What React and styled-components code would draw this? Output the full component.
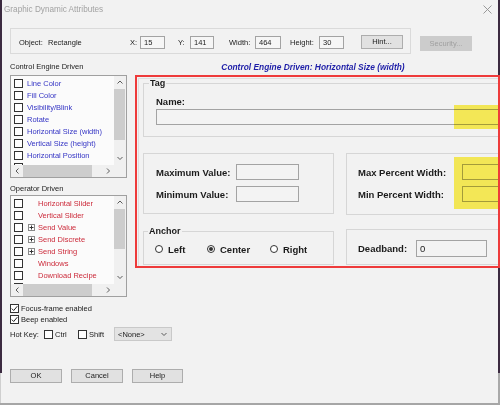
import React from "react";
import styled, { createGlobalStyle } from "styled-components";

const GlobalStyle = createGlobalStyle`
  html, body { margin: 0; padding: 0; background: #f2f2f2; }
  * { box-sizing: border-box; }
`;

const DARK = "#3b2a40";

const Window = styled.div`
  width: 500px;
  height: 405px;
  display: flex;
  flex-direction: column;
  overflow: hidden;
  background:
    linear-gradient(${DARK}, ${DARK}) left top / 2px 373px no-repeat,
    linear-gradient(${DARK}, ${DARK}) right top / 2px 373px no-repeat,
    linear-gradient(#cfcfcf, #cfcfcf) left 373px / 1px 32px no-repeat,
    linear-gradient(#a9a9a9, #a9a9a9) right 373px / 2px 32px no-repeat,
    #f2f2f2;
  border-bottom: 2px solid #a6a6a6;
  font-family: "Liberation Sans", Arial, sans-serif;
  font-size: 7.5px;
  color: #1b1b1b;
`;

const TitleBar = styled.div`
  height: 19px;
  flex: none;
  display: flex;
  align-items: center;
  justify-content: space-between;
  padding: 0 8px 0 4px;
  color: #a2a2a2;
  font-size: 8.2px;
`;

const TopRow = styled.div`
  margin-top: 9px;
  display: flex;
  align-items: flex-start;
  padding-left: 10px;
  flex: none;
`;

const TopGroup = styled.div`
  width: 401px;
  height: 26px;
  border: 1px solid #dadada;
  display: flex;
  align-items: center;
  padding: 2px 0 0 8px;
`;

const Label = styled.span`
  display: inline-block;
  width: ${(p) => p.$w}px;
  flex: none;
  white-space: nowrap;
`;

const Field = styled.div`
  display: flex;
  align-items: center;
  margin-left: ${(p) => p.$ml || 0}px;
`;

const TextBox = styled.div`
  width: ${(p) => p.$w}px;
  height: 13px;
  border: 1px solid #a3a3a3;
  background: #f6f6f6;
  padding-left: 3px;
  line-height: 11px;
  flex: none;
`;

const Button = styled.button`
  width: ${(p) => p.$w}px;
  height: ${(p) => p.$h}px;
  margin-left: ${(p) => p.$ml || 0}px;
  margin-top: ${(p) => p.$mt || 0}px;
  border: 1px solid ${(p) => (p.disabled ? "#cccccc" : "#adadad")};
  background: ${(p) => (p.disabled ? "#cccccc" : "#e1e1e1")};
  color: ${(p) => (p.disabled ? "#a0a0a0" : "#1b1b1b")};
  font-family: inherit;
  font-size: 7.5px;
  padding: 0;
  flex: none;
  line-height: 1;
`;

const Main = styled.div`
  display: flex;
  padding-left: 10px;
  margin-top: 7px;
  flex: none;
`;

const LeftCol = styled.div`
  width: 118px;
  display: flex;
  flex-direction: column;
  flex: none;
`;

const SectionLabel = styled.div`
  height: ${(p) => p.$h}px;
  line-height: ${(p) => p.$lh}px;
  margin-top: ${(p) => p.$mt || 0}px;
  white-space: nowrap;
`;

const ListBox = styled.div`
  width: 117px;
  height: ${(p) => p.$h}px;
  border: 1px solid #a0a0a0;
  background: #fbfbfb;
  display: grid;
  grid-template-columns: 1fr 12px;
  grid-template-rows: 1fr 12px;
  flex: none;
`;

const ListItems = styled.div`
  overflow: hidden;
  padding: 1px 0 0 3px;
`;

const ListRow = styled.div`
  height: 12px;
  display: flex;
  align-items: center;
  white-space: nowrap;
  color: ${(p) => p.$color};
`;

const Check = styled.span`
  width: 9px;
  height: 9px;
  border: 1px solid #333;
  background: #fff;
  flex: none;
  margin-right: ${(p) => p.$mr || 0}px;
  display: inline-flex;
  align-items: center;
  justify-content: center;
`;

const Expander = styled.span`
  width: 7px;
  height: 7px;
  margin: 0 3px 0 5px;
  border: 1px solid #8a8a8a;
  background: #fff;
  flex: none;
  display: inline-flex;
  align-items: center;
  justify-content: center;
  visibility: ${(p) => (p.$show ? "visible" : "hidden")};
`;

const VScroll = styled.div`
  grid-column: 2;
  grid-row: 1;
  display: flex;
  flex-direction: column;
  background: #f0f0f0;
`;

const HScroll = styled.div`
  grid-column: 1;
  grid-row: 2;
  display: flex;
  background: #f0f0f0;
`;

const Corner = styled.div`
  grid-column: 2;
  grid-row: 2;
  background: #f0f0f0;
`;

const ArrowCell = styled.div`
  flex: none;
  width: ${(p) => (p.$horizontal ? "12px" : "auto")};
  height: ${(p) => (p.$horizontal ? "auto" : "13px")};
  display: flex;
  align-items: center;
  justify-content: center;
`;

const Track = styled.div`
  flex: 1;
  display: flex;
  flex-direction: ${(p) => (p.$horizontal ? "row" : "column")};
`;

const Thumb = styled.div`
  background: #cdcdcd;
  ${(p) =>
    p.$horizontal
      ? `width: ${p.$size}px; margin: 0 0 0 0;`
      : `height: ${p.$size}px; margin: 0 1px 0 0;`}
`;

const CheckRow = styled.div`
  height: 11px;
  display: flex;
  align-items: center;
  margin-top: ${(p) => p.$mt || 0}px;
  white-space: nowrap;
`;

const HotKeyRow = styled.div`
  display: grid;
  grid-template-columns: 34px 34px 36px 58px;
  height: 14px;
  align-items: center;
  margin-top: 2px;
  white-space: nowrap;
`;

const InlineCheck = styled.span`
  display: flex;
  align-items: center;
`;

const Dropdown = styled.div`
  height: 14px;
  border: 1px solid #c9c9c9;
  background: #e3e3e3;
  display: flex;
  align-items: center;
  justify-content: space-between;
  padding: 0 4px 0 3px;
`;

const RightCol = styled.div`
  width: 365px;
  margin-left: 7px;
  display: flex;
  flex-direction: column;
  flex: none;
`;

const Caption = styled.div`
  height: 14px;
  line-height: 12px;
  text-align: center;
  padding-right: 9px;
  color: #1f1fa8;
  font-weight: bold;
  font-style: italic;
  font-size: 8.4px;
  white-space: nowrap;
`;

const RedBox = styled.div`
  height: 193px;
  border: 2px solid #ee3b3b;
  padding: 1px 0 0 1px;
  display: flex;
`;

const InnerPanel = styled.div`
  flex: 1;
  border-left: 1px solid #dedede;
  border-top: 1px solid #dedede;
  overflow: hidden;
  padding-left: 4px;
`;

const PanelGrid = styled.div`
  display: grid;
  grid-template-columns: 191px 160px;
  column-gap: 12px;
  align-items: start;
  font-size: 9.5px;
  font-weight: bold;
  color: #1b1b1b;
`;

const GroupSet = styled.fieldset`
  grid-column: ${(p) => (p.$span ? "1 / -1" : "auto")};
  margin: ${(p) => p.$mt || 0}px 0 0 0;
  padding: 0 0 ${(p) => p.$pb}px ${(p) => p.$pl}px;
  border: 1px solid #d6d6d6;
  min-width: 0;
`;

const Legend = styled.legend`
  padding: 0 1px;
  margin-left: -7px;
  line-height: ${(p) => p.$lh}px;
  font-size: 9px;
  font-weight: bold;
`;

const GroupBox = styled.div`
  position: relative;
  margin-top: ${(p) => p.$mt || 0}px;
  height: ${(p) => p.$h}px;
  border: 1px solid #d6d6d6;
  padding: 10px 0 0 ${(p) => p.$pl}px;
`;

const NameLabel = styled.div`
  margin-top: 9px;
  line-height: 11px;
`;

const FieldWrap = styled.div`
  position: relative;
  margin-top: 2px;
  height: 16px;
`;

const PanelInput = styled.div`
  width: ${(p) => p.$w}px;
  height: ${(p) => p.$h || 16}px;
  border: 1px solid #a3a3a3;
  background: #f3f3f3;
  font-weight: normal;
  padding-left: 3px;
  line-height: ${(p) => (p.$h || 16) - 2}px;
`;

const FormGrid = styled.div`
  display: grid;
  grid-template-columns: ${(p) => p.$cols};
  grid-auto-rows: ${(p) => p.$row}px;
  row-gap: 6px;
  align-items: center;
  white-space: nowrap;
`;

const Highlight = styled.div`
  position: absolute;
  left: ${(p) => p.$x}px;
  top: ${(p) => p.$y}px;
  width: ${(p) => p.$w}px;
  height: ${(p) => p.$h}px;
  background: #fff35a;
  mix-blend-mode: multiply;
  pointer-events: none;
`;

const RadioRow = styled.div`
  margin-top: 7px;
  height: 12px;
  display: flex;
  align-items: center;
`;

const RadioItem = styled.label`
  display: flex;
  align-items: center;
  width: ${(p) => p.$w}px;
  flex: none;
`;

const RadioDot = styled.span`
  width: 8px;
  height: 8px;
  border-radius: 50%;
  border: 1px solid #333;
  background: #fff;
  margin-right: 5px;
  display: inline-flex;
  align-items: center;
  justify-content: center;
  &::after {
    content: "";
    width: 4px;
    height: 4px;
    border-radius: 50%;
    background: ${(p) => (p.$checked ? "#333" : "transparent")};
  }
`;

const ButtonRow = styled.div`
  margin-top: auto;
  margin-bottom: 20px;
  padding-left: 10px;
  display: flex;
  gap: 9px;
  flex: none;
`;

const CloseIcon = () => (
  <svg width="9" height="9" viewBox="0 0 9 9">
    <path d="M0.5 0.5 L8.5 8.5 M8.5 0.5 L0.5 8.5" stroke="#8f8f8f" strokeWidth="0.9" />
  </svg>
);

const Chevron = ({ dir }) => {
  const d = {
    up: "M0.5 3.5 L3 1 L5.5 3.5",
    down: "M0.5 1 L3 3.5 L5.5 1",
    left: "M3.5 0.5 L1 3 L3.5 5.5",
    right: "M1 0.5 L3.5 3 L1 5.5",
  }[dir];
  const horiz = dir === "left" || dir === "right";
  return (
    <svg width={horiz ? 5 : 6} height={horiz ? 6 : 5} viewBox={horiz ? "0 0 5 6" : "0 0 6 5"}>
      <path d={d} fill="none" stroke="#5a5a5a" strokeWidth="1" />
    </svg>
  );
};

const Tick = () => (
  <svg width="7" height="7" viewBox="0 0 7 7">
    <path d="M0.8 3.6 L2.7 5.5 L6.3 1.2" fill="none" stroke="#222" strokeWidth="1" />
  </svg>
);

const Plus = () => (
  <svg width="5" height="5" viewBox="0 0 5 5">
    <path d="M0.5 2.5 H4.5 M2.5 0.5 V4.5" stroke="#333" strokeWidth="1" />
  </svg>
);

const engineItems = [
  "Line Color",
  "Fill Color",
  "Visibility/Blink",
  "Rotate",
  "Horizontal Size (width)",
  "Vertical Size (height)",
  "Horizontal Position",
  "Vertical Position",
];

const operatorItems = [
  { t: "Horizontal Slider" },
  { t: "Vertical Slider" },
  { t: "Send Value", plus: true },
  { t: "Send Discrete", plus: true },
  { t: "Send String", plus: true },
  { t: "Windows" },
  { t: "Download Recipe" },
  { t: "Upload Recipe" },
];

const Scrollbars = ({ vThumb }) => (
  <>
    <VScroll>
      <ArrowCell>
        <Chevron dir="up" />
      </ArrowCell>
      <Track>
        <Thumb $size={vThumb} />
      </Track>
      <ArrowCell>
        <Chevron dir="down" />
      </ArrowCell>
    </VScroll>
    <HScroll>
      <ArrowCell $horizontal>
        <Chevron dir="left" />
      </ArrowCell>
      <Track $horizontal>
        <Thumb $horizontal $size={69} />
      </Track>
      <ArrowCell $horizontal>
        <Chevron dir="right" />
      </ArrowCell>
    </HScroll>
    <Corner />
  </>
);

export default function App() {
  return (
    <>
      <GlobalStyle />
      <Window>
        <TitleBar>
          <span>Graphic Dynamic Attributes</span>
          <CloseIcon />
        </TitleBar>

        <TopRow>
          <TopGroup>
            <Field>
              <Label $w={29}>Object:</Label>
              <Label $w={82}>Rectangle</Label>
            </Field>
            <Field>
              <Label $w={10}>X:</Label>
              <TextBox $w={25}>15</TextBox>
            </Field>
            <Field $ml={13}>
              <Label $w={12}>Y:</Label>
              <TextBox $w={24}>141</TextBox>
            </Field>
            <Field $ml={15}>
              <Label $w={26}>Width:</Label>
              <TextBox $w={26}>464</TextBox>
            </Field>
            <Field $ml={9}>
              <Label $w={29}>Height:</Label>
              <TextBox $w={25}>30</TextBox>
            </Field>
            <Button $w={42} $h={14} $ml={17}>
              Hint...
            </Button>
          </TopGroup>
          <Button $w={52} $h={15} $ml={9} $mt={8} disabled>
            Security...
          </Button>
        </TopRow>

        <Main>
          <LeftCol>
            <SectionLabel $h={14} $lh={12}>
              Control Engine Driven
            </SectionLabel>
            <ListBox $h={103}>
              <ListItems>
                {engineItems.map((t) => (
                  <ListRow key={t} $color="#3434c4">
                    <Check $mr={4} />
                    {t}
                  </ListRow>
                ))}
              </ListItems>
              <Scrollbars vThumb={51} />
            </ListBox>

            <SectionLabel $h={13} $lh={13} $mt={4}>
              Operator Driven
            </SectionLabel>
            <ListBox $h={102}>
              <ListItems>
                {operatorItems.map((it) => (
                  <ListRow key={it.t} $color="#cc2b3b">
                    <Check />
                    <Expander $show={it.plus}>{it.plus && <Plus />}</Expander>
                    {it.t}
                  </ListRow>
                ))}
              </ListItems>
              <Scrollbars vThumb={40} />
            </ListBox>

            <CheckRow $mt={6}>
              <Check $mr={2}>
                <Tick />
              </Check>
              Focus-frame enabled
            </CheckRow>
            <CheckRow>
              <Check $mr={2}>
                <Tick />
              </Check>
              Beep enabled
            </CheckRow>
            <HotKeyRow>
              <span>Hot Key:</span>
              <InlineCheck>
                <Check $mr={2} />
                Ctrl
              </InlineCheck>
              <InlineCheck>
                <Check $mr={2} />
                Shift
              </InlineCheck>
              <Dropdown>
                <span>&lt;None&gt;</span>
                <Chevron dir="down" />
              </Dropdown>
            </HotKeyRow>
          </LeftCol>

          <RightCol>
            <Caption>Control Engine Driven: Horizontal Size (width)</Caption>
            <RedBox>
              <InnerPanel>
                <PanelGrid>
                  <GroupSet $span $pb={11} $pl={12}>
                    <Legend $lh={8}>Tag</Legend>
                    <NameLabel>Name:</NameLabel>
                    <FieldWrap>
                      <PanelInput $w={370} />
                      <Highlight $x={298} $y={-4} $w={60} $h={24} />
                    </FieldWrap>
                  </GroupSet>

                  <GroupBox $mt={16} $h={61} $pl={12}>
                    <FormGrid $cols="80px 63px" $row={16}>
                      <span>Maximum Value:</span>
                      <PanelInput $w={63} />
                      <span>Minimum Value:</span>
                      <PanelInput $w={63} />
                    </FormGrid>
                  </GroupBox>

                  <GroupBox $mt={16} $h={62} $pl={11}>
                    <FormGrid $cols="104px 60px" $row={16}>
                      <span>Max Percent Width:</span>
                      <PanelInput $w={60} />
                      <span>Min Percent Width:</span>
                      <PanelInput $w={60} />
                    </FormGrid>
                    <Highlight $x={107} $y={3} $w={60} $h={52} />
                  </GroupBox>

                  <GroupSet $mt={11} $pb={9} $pl={11}>
                    <Legend $lh={10}>Anchor</Legend>
                    <RadioRow>
                      <RadioItem $w={52}>
                        <RadioDot />
                        Left
                      </RadioItem>
                      <RadioItem $w={63}>
                        <RadioDot $checked />
                        Center
                      </RadioItem>
                      <RadioItem $w={60}>
                        <RadioDot />
                        Right
                      </RadioItem>
                    </RadioRow>
                  </GroupSet>

                  <GroupBox $mt={14} $h={36} $pl={11}>
                    <FormGrid $cols="58px 71px" $row={17}>
                      <span>Deadband:</span>
                      <PanelInput $w={71} $h={17}>
                        0
                      </PanelInput>
                    </FormGrid>
                  </GroupBox>
                </PanelGrid>
              </InnerPanel>
            </RedBox>
          </RightCol>
        </Main>

        <ButtonRow>
          <Button $w={52} $h={14}>
            OK
          </Button>
          <Button $w={52} $h={14}>
            Cancel
          </Button>
          <Button $w={51} $h={14}>
            Help
          </Button>
        </ButtonRow>
      </Window>
    </>
  );
}
